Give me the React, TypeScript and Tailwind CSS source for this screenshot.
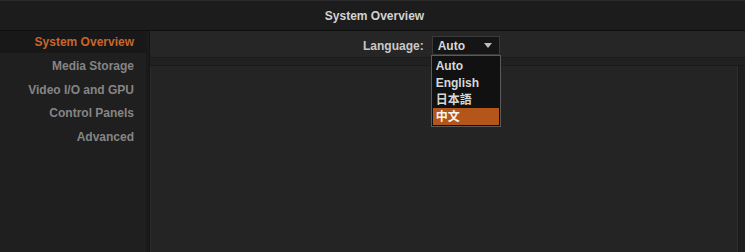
import React from 'react';

const navItems = ['System Overview', 'Media Storage', 'Video I/O and GPU', 'Control Panels', 'Advanced'];
const languages = ['Auto', 'English', '日本語', '中文'];

export default function App() {
  const font = { fontFamily: '"Liberation Sans", Arial, "Noto Sans CJK SC", sans-serif' };

  return (
    <div className="w-[745px] h-[252px] bg-[#202020] flex flex-col overflow-hidden text-[12px] font-bold" style={font}>
      {/* header */}
      <div className="h-[31px] shrink-0 bg-[#1c1c1c] border-t border-[#2c2c2c] border-b border-b-[#0e0e0e] flex items-center justify-center">
        <span className="text-[#d2d2d2] pl-[4px]">System Overview</span>
      </div>

      <div className="flex flex-1 min-h-0">
        {/* sidebar */}
        <div className="w-[146px] shrink-0 bg-[#1f1f1f] flex flex-col">
          {navItems.map((item, i) => (
            <div
              key={item}
              className={
                i === 0
                  ? 'h-[22px] mb-[1.5px] flex items-center justify-end pr-[12px] bg-[#181818] text-[#c8652c]'
                  : 'h-[23.5px] flex items-center justify-end pr-[12px] text-[#858585]'
              }
            >
              {item}
            </div>
          ))}
        </div>
        <div className="w-[4px] shrink-0 bg-[#1a1a1a] border-r border-[#151515]" />

        {/* main */}
        <div className="flex-1 flex flex-col min-w-0">
          <div className="h-[27px] shrink-0 bg-[#262626] border-b border-[#1b1b1b] flex items-center pt-[3px] pl-[213px]">
            <span className="text-[#c8c8c8]">Language:</span>
            <div className="relative ml-[8px]">
              <div className="w-[68px] h-[19px] bg-[#151515] border border-[#3a3a3a] flex items-center justify-between pl-[5px] pr-[7px]">
                <span className="text-[#d8d8d8]">Auto</span>
                <svg width="8" height="5" viewBox="0 0 8 5">
                  <path d="M0 0 L8 0 L4 5 Z" fill="#bdbdbd" />
                </svg>
              </div>
              <div className="absolute left-[-1px] top-[19px] w-[70px] bg-[#111111] border border-[#5a5a5a] p-[1px] z-10">
                {languages.map((lang, i) => (
                  <div
                    key={lang}
                    className={
                      i === 3
                        ? 'h-[17px] flex items-center pl-[3px] bg-[#b4561a] text-[#f4f4f4]'
                        : 'h-[17px] flex items-center pl-[3px] text-[#d8d8d8]'
                    }
                  >
                    {lang}
                  </div>
                ))}
              </div>
            </div>
          </div>
          <div className="h-[8px] shrink-0 bg-[#212121] border-b border-[#1a1a1a]" />
          <div className="flex flex-1 min-h-0">
            <div className="flex-1 bg-[#242424] border-l border-[#2c2c2c] border-r border-r-[#303030]" />
            <div className="w-[7px] shrink-0 bg-[#1f1f1f] border-l border-[#181818]" />
          </div>
        </div>
      </div>
    </div>
  );
}
